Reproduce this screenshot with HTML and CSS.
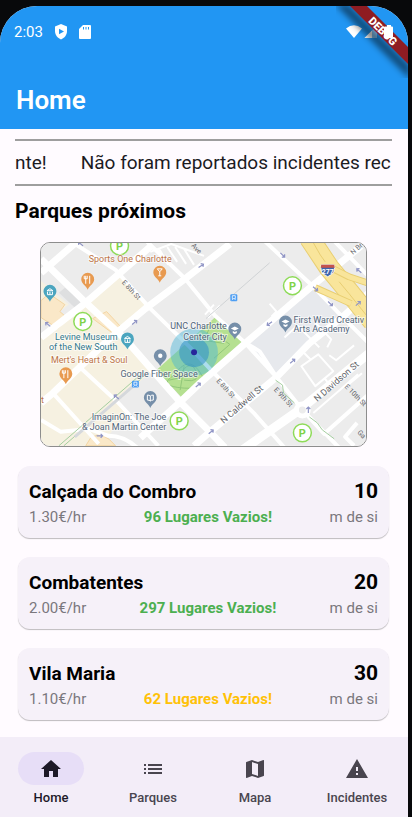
FILE: index.html
```html
<!DOCTYPE html>
<html lang="pt">
<head>
<meta charset="utf-8">
<meta name="viewport" content="width=device-width, initial-scale=1">
<title>Home</title>
<link rel="stylesheet" href="styles.css">
</head>
<body>
<div class="screen">
  <header class="app-bar">
    <div class="status">
      <span class="status-time">2:03</span>
      <svg class="status-shield" width="14" height="16" viewBox="0 0 14 16"><path fill="#fff" d="M7 0 13 2.400V7c0 4-2.500 7-6 8.500C3.500 14 1 11 1 7V2.400z"/><path fill="#2196f3" d="M5 4.700 10 7.500 5 10.300z"/></svg>
      <svg class="status-card" width="12" height="14" viewBox="0 0 12 14"><path fill="#fff" d="M4 0h7q1 0 1 1v12q0 1-1 1H1q-1 0-1-1V4z"/><path stroke="#2196f3" stroke-width="1" d="M4.500 2v2.500M7 2v2.500M9.500 2v2.500"/></svg>
      <svg class="status-radio" width="50" height="16" viewBox="0 0 50 16"><path fill="#fff" d="M0 4.500Q8-2.200 16 4.500L8 14z"/><path fill="#fff" fill-opacity=".45" d="M31 1.500V14H18.500z"/><path fill="#fff" d="M26 6.500V14h-7.500z"/></svg>
    </div>
    <h1>Home</h1>
    <svg class="debug" width="72" height="72" viewBox="0 0 72 72">
      <defs><filter id="soft" x="-20%" y="-20%" width="140%" height="140%"><feGaussianBlur stdDeviation="3"/></filter></defs>
      <path d="M12-2 74 60V73L-1-2z" fill="#000" fill-opacity=".5" filter="url(#soft)"/>
      <path d="M14 0h17l41 41v17z" fill="#8f1c22"/>
      <text x="0" y="4" transform="translate(47 25) rotate(45)" text-anchor="middle">DEBUG</text>
      <path fill="#fff" d="M51 19h4v1.500h1q1 0 1 1V31q0 1-1 1h-7q-1 0-1-1v-9.500q0-1 1-1h2z"/>
    </svg>
  </header>

  <main class="content">
    <div class="ticker"><span>nte!</span><span>Não foram reportados incidentes rec</span></div>
    <h2>Parques próximos</h2>

    <div class="map">
      <svg viewBox="0 0 327 204" role="img" aria-label="Mapa">
        <defs>
          <g id="pin"><path d="M0 8C-1.500 4-6.500 2-6.500-2.500a6.500 6.500 0 0 1 13 0C6.500 2 1.500 4 0 8z"/></g>
          <g id="park"><circle r="9" fill="#fff" stroke="#8edb58" stroke-width="1.500"/><text class="park-letter" y="4" text-anchor="middle">P</text></g>
          <g id="arrow"><path d="M-3 0H3M1-2 3 0 1 2" fill="none" stroke="#8f94c5" stroke-width="1.200"/></g>
          <g id="station"><rect x="-3.500" y="-3.500" width="7" height="7" rx="1" fill="#4b9df3"/><path d="M-1.500-2h3v3h-3zM-2 2.500l1-1M2 2.500l-1-1" fill="none" stroke="#fff" stroke-width=".8"/></g>
        </defs>
        <rect width="327" height="204" fill="#ececec"/>
        <path fill="#f6f1e1" d="M0 95 45 60 75 30 110 64 77 93 118 130 60 204H0zM0 38 28 62 0 84z"/>
        <path fill="#ececec" d="M77 160 112 128 140 160 105 191z"/>
        <path fill="#e7e9ed" d="M215 97 273 47 302 74 237 132 208 104z"/>
        <path fill="#dedfe0" d="m18 50 6-5 18 14-7 7z"/>
        <path fill="#fae8c8" stroke="#f3d5a2" d="m0 58 8-7 16 11-5 7 8 7-10 10L0 75zM52 76l14-7 14 15-9 6zM50 196q12-8 25 8H45z"/>
        <path fill="#b5e091" d="m176 74 27 25-61 57-26-28z"/>
        <path fill="none" stroke="#91c779" d="M134 133q14-21 26-3t-16 16-10-13M142 129q9-12 14 0t-12 9M176 92l14 10-16 14M172 80l-8 18 20 3M129 138l26-6M140 148l4-24"/>

        <g class="roads">
          <g class="wide">
            <path d="M0 30 38-3M190 1 145 36 105 66 67 98 12 151 0 161M0 95 45 60 112 2"/>
            <path d="M322 3 273 43 210 97 160 141 140 160 100 196M154 204 170 190 237 135 270 101 305 73 330 50"/>
            <path d="M203 208 260 168 330 111" stroke-width="9"/>
            <path d="M0 16 45 60 85 97 140 160 170 190 185 206"/>
          </g>
          <g class="mid">
            <path d="M28-3 75 27 110 66 150 105 173 130 215 172 245 206M105-3 145 36 175 73 205 100 237 135 263 168 300 206M225-2 273 43 302 73 330 101M295-2 330 34M37 123 77 160 118 204M12 151 58 202"/>
            <path d="M0 178 20 190 48 187 68 194Q84 194 98 207M205 100 220 109 237 135M263 168 285 192 330 152M315 204 306 195 318 181"/>
          </g>
          <path class="narrow" d="M110 9 131 1 164 13M119 6l9 16M127 4l10 15M135 4l11 17M144 6l10 16M168 75l12-12M165 72l9-10M230 61l7 8-5 5M245 95l13-12 22 22M276 80l16 17-4 8M262 124l17-12 15 17-18 15zM286 137l6 8M264 110l8 8M290 113l7 5 18-15M306 145l17-14M274 171l45-39"/>
          <circle cx="263" cy="168" r="6" fill="#ececec" stroke-width="5"/>
        </g>
        <path d="M166 76 230 20" stroke="#d0d3d5"/>
        <g fill="none" stroke="#a4ce9f"><path d="M18 204 103 130"/><path d="M23 204 106 132"/><path d="m236 138 7 5 1 8 11 10M270 175l8 6 5 7 12 9"/></g>
        <path d="M34 195 95 142" stroke="#d5d8dc" stroke-width="3"/>

        <g fill="none" stroke-linejoin="round">
          <path d="M270-5 290 25 309 48 334 79" stroke="#e9cf73" stroke-width="21"/>
          <path d="M270-5 290 25 309 48 334 79" stroke="#f9e59b" stroke-width="19"/>
          <path d="M294 26 310 34 331 41M276 45 294 53 312 61" stroke="#e9cf73" stroke-width="7"/>
          <path d="M294 26 310 34 331 41M276 45 294 53 312 61" stroke="#f9e59b" stroke-width="5"/>
          <path d="m273-2 8 14 5 7M300 39l10 12 20 25" stroke="#e8ce72"/>
        </g>

        <circle cx="154" cy="110" r="24" fill="#47b4d8" fill-opacity=".45"/>
        <circle cx="154" cy="110" r="15" fill="#3795c7" fill-opacity=".6"/>
        <circle cx="154" cy="110" r="3" fill="#27269b"/>

        <use href="#arrow" transform="translate(161 23) rotate(-35)"/><use href="#arrow" transform="translate(7 82) rotate(220)"/><use href="#arrow" transform="translate(94 80) rotate(-40)"/><use href="#arrow" transform="translate(243 12) rotate(45)"/><use href="#arrow" transform="translate(276 46) rotate(40)"/><use href="#arrow" transform="translate(291 61) rotate(45)"/><use href="#arrow" transform="translate(319 61) rotate(-42)"/><use href="#arrow" transform="translate(320 28) rotate(220)"/><use href="#arrow" transform="translate(230 81) rotate(145)"/><use href="#arrow" transform="translate(171 190) rotate(-40)"/><use href="#arrow" transform="translate(253 119) rotate(-40)"/><use href="#arrow" transform="translate(269 168) rotate(-90)"/><use href="#arrow" transform="translate(76 155) rotate(220)"/><use href="#arrow" transform="translate(59 194)"/><use href="#arrow" transform="translate(158 143) rotate(-40)"/><use href="#arrow" transform="translate(40 1) rotate(220)"/>

        <use href="#park" x="79" y="3"/><use href="#park" x="42" y="79"/><use href="#park" x="253" y="43"/><use href="#park" x="139" y="179"/><use href="#park" x="263" y="191"/>
        <use href="#station" x="194" y="55"/><use href="#station" x="95" y="142"/>

        <g fill="#e89a50"><use href="#pin" x="47" y="39"/><use href="#pin" x="119.500" y="32"/><use href="#pin" x="25" y="134"/></g>
        <g fill="#4ba5bf"><use href="#pin" x="9" y="51"/><use href="#pin" x="87" y="99"/></g>
        <g fill="#768fa9"><use href="#pin" x="195" y="89"/><use href="#pin" x="246" y="82"/><use href="#pin" x="120" y="116"/><use href="#pin" x="110" y="158"/></g>
        <g fill="none" stroke="#fff">
          <path d="M45 33v8M43.500 33v3h3v-3M49 33v8M23 128v8M21.500 128v3h3v-3M27 128v8M117 26h5l-2.500 3zM119.500 29v4M118 33h3"/>
          <path d="m6 48 3-2 3 2zM6.500 49v3h5v-3M9 49v3M84 96l3-2 3 2zM84.500 97v3h5v-3M87 97v3"/>
          <path d="M107 153q2 0 3 1 1-1 3-1v5q-2 0-3 1-1-1-3-1zM110 154v5"/>
        </g>
        <g fill="#fff"><path d="m191 86 4-2 4 2-4 2zM193 88.500l2 1 2-1v2l-2 1-2-1z"/><path d="m242 79 4-2 4 2-4 2zM244 81.500l2 1 2-1v2l-2 1-2-1z"/><circle cx="120" cy="113.500" r="2.200"/></g>
        <path fill="#3f66ad" stroke="#fff" stroke-width=".8" d="M282 22h13q1 2 0 5c0 4-4 5-6.500 7-2.500-2-6.500-3-6.500-7q-1-3 0-5z"/><path fill="#c6534b" d="M282 22h13l.5 3h-14z"/>
        <text class="shield" x="288.500" y="31" text-anchor="middle">277</text>

        <g class="place orange"><text x="48" y="19">Sports One Charlotte</text><text x="10" y="121">Mert's Heart &amp; Soul</text><text x="0" y="161">t</text></g>
        <g class="place teal"><text x="14" y="98">Levine Museum</text><text x="8" y="108">of the New South</text></g>
        <g class="place slate"><text x="187" y="87" text-anchor="end">UNC Charlotte</text><text x="187" y="98" text-anchor="end">Center City</text><text x="80" y="135">Google Fiber Space</text><text x="126" y="178" text-anchor="end">ImaginOn: The Joe</text><text x="126" y="188" text-anchor="end">&amp; Joan Martin Center</text><text x="254" y="80">First Ward Creativ</text><text x="254" y="90">Arts Academy</text></g>
        <g class="street"><text transform="translate(81 40) rotate(47)">E 8th St</text><text transform="translate(176 139) rotate(47)">E 8th St</text><text transform="translate(234 148) rotate(47)">E 9th St</text><text transform="translate(305 145) rotate(45)">E 10th St</text><text transform="translate(151 3) rotate(47)">Ave</text><text transform="translate(318 191) rotate(47)">Ga</text><text class="big" transform="translate(184 182) rotate(-41)">N Caldwell St</text><text class="big" transform="translate(278 160) rotate(-41)">N Davidson St</text><text transform="translate(314 12) rotate(-41)">N Br</text></g>
      </svg>
    </div>

    <ul class="parks">
      <li class="card">
        <div class="row"><h3>Calçada do Combro</h3><strong>10</strong></div>
        <div class="row detail"><span>1.30€/hr</span><b class="many">96 Lugares Vazios!</b><span>m de si</span></div>
      </li>
      <li class="card">
        <div class="row"><h3>Combatentes</h3><strong>20</strong></div>
        <div class="row detail"><span>2.00€/hr</span><b class="many">297 Lugares Vazios!</b><span>m de si</span></div>
      </li>
      <li class="card">
        <div class="row"><h3>Vila Maria</h3><strong>30</strong></div>
        <div class="row detail"><span>1.10€/hr</span><b class="few">62 Lugares Vazios!</b><span>m de si</span></div>
      </li>
    </ul>
  </main>

  <nav class="tabs">
    <a class="tab active" href="#home"><span class="pill"><svg viewBox="0 0 24 24"><path d="M10 20v-6h4v6h5v-8h3L12 3 2 12h3v8z"/></svg></span>Home</a>
    <a class="tab" href="#parques"><span class="pill"><svg viewBox="0 0 24 24"><path d="M3 13h2v-2H3zm0 4h2v-2H3zm0-8h2V7H3zm4 4h14v-2H7zm0 4h14v-2H7zM7 7v2h14V7z"/></svg></span>Parques</a>
    <a class="tab" href="#mapa"><span class="pill"><svg viewBox="0 0 24 24"><path d="m20.500 3-.16.030L15 5.100 9 3 3.360 4.900c-.21.070-.36.250-.36.480V20.500c0 .28.220.5.500.5l.16-.030L9 18.900l6 2.100 5.640-1.900c.21-.070.360-.25.360-.48V3.500c0-.28-.22-.5-.5-.5zM15 19l-6-2.110V5l6 2.110z"/></svg></span>Mapa</a>
    <a class="tab" href="#incidentes"><span class="pill"><svg viewBox="0 0 24 24"><path d="M1 21h22L12 2zm12-3h-2v-2h2zm0-4h-2v-4h2z"/></svg></span>Incidentes</a>
  </nav>
</div>
</body>
</html>
```
FILE: styles.css
```css
* { box-sizing: border-box; }

body {
  margin: 0;
  padding: 6px 4px 0 0;
  min-height: 100vh;
  display: flex;
  background: #08090b;
  font-family: Roboto, "Liberation Sans", sans-serif;
  color: #000;
}

h1, h2, h3, ul { margin: 0; padding: 0; }

.screen {
  flex: 1;
  min-width: 0;
  display: flex;
  flex-direction: column;
  background: #fffbff;
  border-radius: 37px 37px 0 0;
  overflow: hidden;
}

.app-bar {
  position: relative;
  padding: 16px 12px 13px 16px;
  background: #2196f3;
  color: #fff;
}

.status {
  display: flex;
  align-items: center;
  height: 20px;
  margin: 0 0 42px -2px;
}
.status-time { font-size: 15px; }
.status-shield { margin-left: 11px; }
.status-card { margin-left: 11px; }
.status-radio { margin-left: auto; }

.app-bar h1 {
  font-size: 26px;
  line-height: 32px;
  font-weight: 600;
}

.debug {
  position: absolute;
  top: 0;
  right: 0;
}
.debug text {
  fill: #fff;
  font-size: 11px;
  font-weight: 900;
}

.content {
  flex: 1;
  padding: 10px 16px 16px 15px;
}

.ticker {
  display: flex;
  gap: 34px;
  padding-top: 1px;
  border: solid #9e9e9e;
  border-width: 2px 0;
  overflow: hidden;
  white-space: nowrap;
  font-size: 19px;
  line-height: 42px;
  color: #1c1b1f;
}

h2 {
  padding-top: 11px;
  font-size: 21px;
  line-height: 28px;
  font-weight: 700;
}

.map {
  margin: 17px 25px 19px;
  border: 1px solid #8d8d8d;
  border-radius: 10px;
  overflow: hidden;
}
.map svg { display: block; width: 100%; height: auto; }
.roads { fill: none; stroke: #fff; stroke-linejoin: round; }
.wide { stroke-width: 7px; }
.mid { stroke-width: 4px; }
.narrow { stroke-width: 2px; }
.park-letter { font-size: 11px; font-weight: 700; fill: #7ed348; }
.place {
  font-size: 9px;
  paint-order: stroke;
  stroke: #fff;
  stroke-opacity: .6;
  stroke-width: 2px;
}
.orange { fill: #bd7447; }
.teal { fill: #33798e; }
.slate { fill: #52657a; }
.street { font-size: 7px; fill: #5f6368; }
.big { font-size: 9px; }
.shield { font-size: 7px; font-weight: 700; fill: #fff; }

.parks {
  display: grid;
  gap: 19px;
  margin: 0 3px;
  list-style: none;
}
.card {
  padding: 11px 11px 9px;
  border-radius: 12px;
  background: #f6f1f9;
  box-shadow: 0 1px 1px rgba(0, 0, 0, .26);
}
.row {
  display: flex;
  justify-content: space-between;
  align-items: center;
  line-height: 29px;
}
.card h3 { font-size: 19px; }
.card strong { font-size: 21px; }
.detail {
  font-size: 15px;
  line-height: 23px;
  color: #7a777d;
}
.many { color: #4caf50; }
.few { color: #ffc107; }

.tabs {
  display: grid;
  grid-template-columns: repeat(4, 1fr);
  padding: 15px 0 11px;
  background: #f3edf8;
}
.tab {
  display: flex;
  flex-direction: column;
  align-items: center;
  gap: 4px;
  font-size: 13px;
  line-height: 17px;
  font-weight: 500;
  color: #49454f;
  text-decoration: none;
}
.pill {
  display: grid;
  place-items: center;
  width: 66px;
  height: 33px;
  border-radius: 17px;
}
.pill svg { width: 24px; height: 24px; fill: currentColor; }
.active { color: #1d1928; }
.active .pill { background: #e7def7; }
```
